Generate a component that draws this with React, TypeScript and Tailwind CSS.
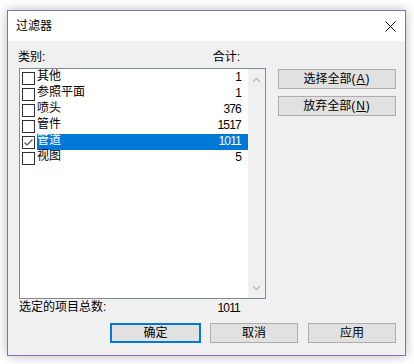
import React from 'react'

const rows = [
    { name: '其他', count: 1, checked: false },
    { name: '参照平面', count: 1, checked: false },
    { name: '喷头', count: 376, checked: false },
    { name: '管件', count: 1517, checked: false },
    { name: '管道', count: 1011, checked: true },
    { name: '视图', count: 5, checked: false },
]

function CheckBox({ checked }: { checked: boolean }) {
    return (
        <svg width="13" height="13" viewBox="0 0 13 13" className="mt-[2px] shrink-0">
            <rect x="0.5" y="0.5" width="12" height="12" fill="#fff" stroke="#333" />
            {checked && <path d="M2.5 6.5 L5 9 L10.5 3.5" fill="none" stroke="#555" strokeWidth="1.2" />}
        </svg>
    )
}

function Chevron({ up }: { up: boolean }) {
    return (
        <svg width="9" height="6" viewBox="0 0 9 6">
            <path d={up ? 'M1 5 L4.5 1.5 L8 5' : 'M1 1 L4.5 4.5 L8 1'} fill="none" stroke="#c2c2c2" strokeWidth="1.6" />
        </svg>
    )
}

function Btn({ children, w, focus }: { children: React.ReactNode; w: string; focus?: boolean }) {
    return (
        <div
            className={`${w} h-[20px] flex items-center justify-center bg-[#e1e1e1] leading-[13px] ${focus ? 'border-2 border-[#0078d7]' : 'border border-[#adadad]'}`}
        >
            {children}
        </div>
    )
}

export default function App() {
    return (
        <div className="w-[414px] h-[364px] bg-white pl-[7px] pt-[10px] text-[12px] text-black font-['Liberation_Sans','Noto_Sans_CJK_SC',sans-serif]">
            <div className="w-[399px] h-[346px] border border-[#8a6bbd] flex flex-col shadow-[0_0_10px_rgba(0,0,0,0.28)]">
                {/* Title bar */}
                <div className="h-[30px] bg-white flex items-center justify-between pl-[8px] pr-[9px]">
                    <span className="leading-[13px]">过滤器</span>
                    <svg width="11" height="11" viewBox="0 0 11 11">
                        <path d="M0.5 0.5 L10.5 10.5 M10.5 0.5 L0.5 10.5" stroke="#111" strokeWidth="1" />
                    </svg>
                </div>

                {/* Body */}
                <div className="flex-1 bg-[#f0f0f0] pl-[11px] pt-[10px]">
                    <div className="flex">
                        <div className="w-[247px]">
                            <div className="h-[13px] flex justify-between leading-[13px] pr-[26px]">
                                <span className="-ml-px">类别:</span>
                                <span>合计:</span>
                            </div>
                            <div className="mt-[4px] h-[231px] border border-[#828790] bg-white flex">
                                <div className="flex-1 pt-px">
                                    {rows.map((r) => (
                                        <div key={r.name} className="h-[16px] flex pl-[2px]">
                                            <CheckBox checked={r.checked} />
                                            <div
                                                className={`ml-[2px] flex-1 flex justify-between pr-[7px] ${r.checked ? 'bg-[#0078d7] text-white' : ''}`}
                                            >
                                                <span className="leading-[13px]">{r.name}</span>
                                                <span className="leading-[15px] tracking-[-0.8px]">{r.count}</span>
                                            </div>
                                        </div>
                                    ))}
                                </div>
                                <div className="w-[17px] bg-[#f0f0f0] flex flex-col items-center justify-between pt-[8px] pb-[7px]">
                                    <Chevron up />
                                    <Chevron up={false} />
                                </div>
                            </div>
                            <div className="mt-[2px] h-[13px] flex justify-between pr-[26px]">
                                <span className="leading-[13px]">选定的项目总数:</span>
                                <span className="leading-[15px] tracking-[-0.8px]">1011</span>
                            </div>
                        </div>
                        <div className="ml-[12px] mt-[18px] flex flex-col gap-[7px]">
                            <Btn w="w-[118px]">
                                选择全部<span className="tracking-[1px]">(<span className="underline underline-offset-[1px]">A</span>)</span>
                            </Btn>
                            <Btn w="w-[118px]">
                                放弃全部<span className="tracking-[1px]">(<span className="underline underline-offset-[1px]">N</span>)</span>
                            </Btn>
                        </div>
                    </div>
                    <div className="mt-[9px] ml-[91px] flex">
                        <Btn w="w-[91px]" focus>确定</Btn>
                        <div className="ml-[9px]">
                            <Btn w="w-[88px]">取消</Btn>
                        </div>
                        <div className="ml-[10px]">
                            <Btn w="w-[88px]">应用</Btn>
                        </div>
                    </div>
                </div>
            </div>
        </div>
    )
}
